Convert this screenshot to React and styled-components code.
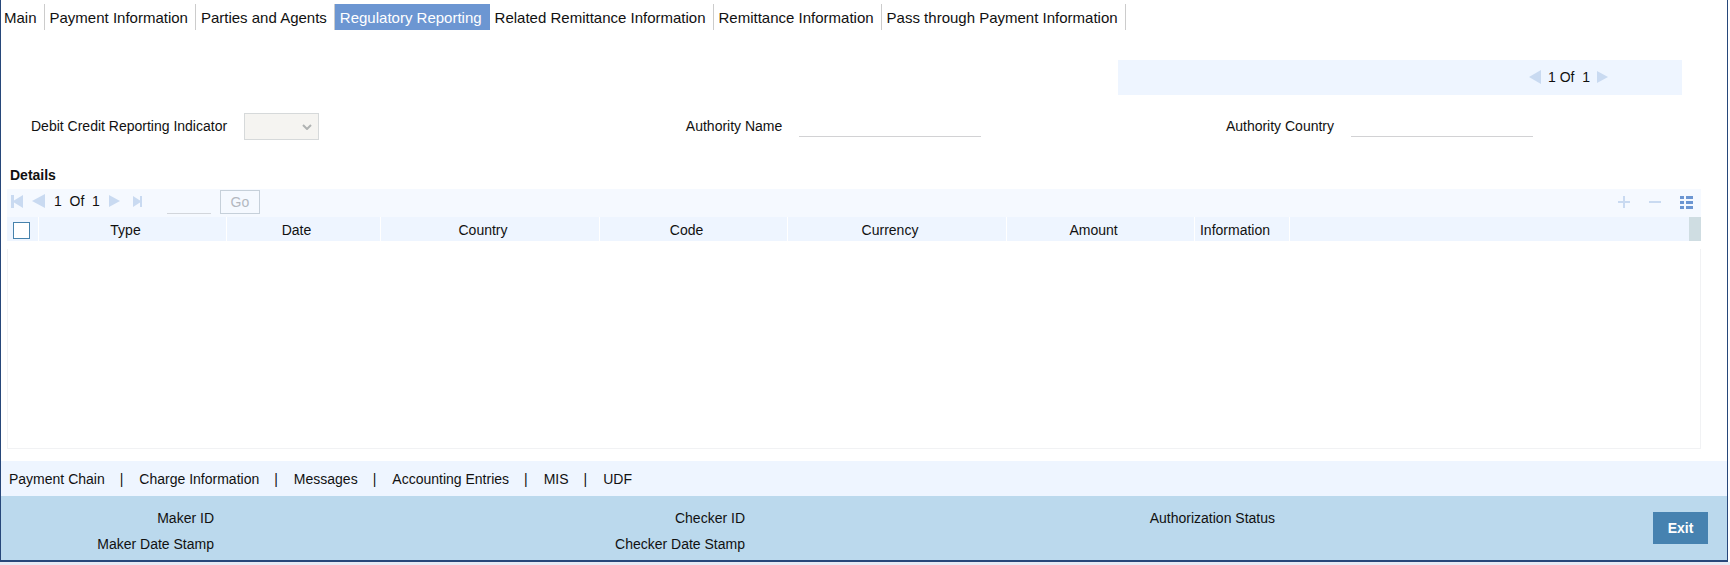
import styled, { createGlobalStyle } from "styled-components";
import { useState } from "react";

const tabs = [
  "Main",
  "Payment Information",
  "Parties and Agents",
  "Regulatory Reporting",
  "Related Remittance Information",
  "Remittance Information",
  "Pass through Payment Information",
];

const columns = [
  { title: "Type", width: 188 },
  { title: "Date", width: 154 },
  { title: "Country", width: 219 },
  { title: "Code", width: 188 },
  { title: "Currency", width: 219 },
  { title: "Amount", width: 188 },
  { title: "Information", width: 95 },
];

const links = [
  "Payment Chain",
  "Charge Information",
  "Messages",
  "Accounting Entries",
  "MIS",
  "UDF",
];

const App = () => {
  const [activeTab, setActiveTab] = useState("Regulatory Reporting");

  return (
    <>
      <GlobalStyle />
      <Window>
        <TabBar>
          {tabs.map((tab) => (
            <Tab
              key={tab}
              $active={tab === activeTab}
              onClick={() => setActiveTab(tab)}
            >
              {tab}
            </Tab>
          ))}
        </TabBar>

        <RecordRow>
          <RecordPager>
            <IconButton aria-label="Previous record">
              <svg width="12" height="14" viewBox="0 0 12 14">
                <path d="M12 0v14L0 7z" />
              </svg>
            </IconButton>
            <PageText>1 Of&nbsp; 1</PageText>
            <IconButton aria-label="Next record">
              <svg width="11" height="12" viewBox="0 0 11 12">
                <path d="M0 0v12l11-6z" />
              </svg>
            </IconButton>
          </RecordPager>
        </RecordRow>

        <Fields>
          <Field>
            <Label htmlFor="indicator">Debit Credit Reporting Indicator</Label>
            <SelectBox>
              <Select id="indicator" disabled />
              <Chevron width="10" height="6" viewBox="0 0 10 6">
                <path d="M1 1l4 4 4-4" />
              </Chevron>
            </SelectBox>
          </Field>
          <Field>
            <Label htmlFor="authority-name">Authority Name</Label>
            <Input id="authority-name" readOnly />
          </Field>
          <Field>
            <Label htmlFor="authority-country">Authority Country</Label>
            <Input id="authority-country" readOnly />
          </Field>
        </Fields>

        <Details>
          <Title>Details</Title>
          <Toolbar>
            <Pager>
              <IconButton aria-label="First page">
                <svg width="12" height="13" viewBox="0 0 12 13">
                  <path d="M0 0h3v5.500L12 0v13L3 7.500V13H0z" />
                </svg>
              </IconButton>
              <IconButton aria-label="Previous page">
                <svg width="13" height="14" viewBox="0 0 13 14">
                  <path d="M13 0v14L0 7z" />
                </svg>
              </IconButton>
              <PageText>1&nbsp; Of&nbsp; 1</PageText>
              <IconButton aria-label="Next page">
                <svg width="11" height="12" viewBox="0 0 11 12">
                  <path d="M0 0v12l11-6z" />
                </svg>
              </IconButton>
              <IconButton aria-label="Last page">
                <svg width="10" height="11" viewBox="0 0 10 11">
                  <path d="M0 0l7 4.500V0h2v11H7V6.500L0 11z" />
                </svg>
              </IconButton>
            </Pager>
            <PageInput aria-label="Page number" readOnly />
            <GoButton disabled>Go</GoButton>
            <Actions>
              <IconButton aria-label="Add row">
                <svg width="12" height="12" viewBox="0 0 12 12">
                  <path d="M5 0h2v5h5v2H7v5H5V7H0V5h5z" />
                </svg>
              </IconButton>
              <IconButton aria-label="Delete row">
                <svg width="12" height="12" viewBox="0 0 12 12">
                  <path d="M0 5h12v2H0z" />
                </svg>
              </IconButton>
              <IconButton $strong aria-label="Single view">
                <svg width="13" height="13" viewBox="0 0 13 13">
                  <path d="M0 0h4v3H0zM6 0h7v3H6zM0 5h4v3H0zM6 5h7v3H6zM0 10h4v3H0zM6 10h7v3H6z" />
                </svg>
              </IconButton>
            </Actions>
          </Toolbar>
          <Table>
            <colgroup>
              <Col $width={32} />
              {columns.map(({ title, width }) => (
                <Col key={title} $width={width} />
              ))}
              <col />
              <Col $width={12} />
            </colgroup>
            <thead>
              <tr>
                <HeadCell>
                  <Checkbox type="checkbox" aria-label="Select all rows" />
                </HeadCell>
                {columns.map(({ title }) => (
                  <HeadCell key={title} scope="col">
                    {title}
                  </HeadCell>
                ))}
                <FillCell />
                <ScrollCell />
              </tr>
            </thead>
          </Table>
          <TableBody />
        </Details>

        <LinkBar>
          {links.map((link) => (
            <LinkItem key={link}>
              <Link href="#">{link}</Link>
            </LinkItem>
          ))}
        </LinkBar>

        <Footer>
          <Audit>
            <span>Maker ID</span>
            <span>Maker Date Stamp</span>
          </Audit>
          <Audit>
            <span>Checker ID</span>
            <span>Checker Date Stamp</span>
          </Audit>
          <Audit>
            <span>Authorization Status</span>
          </Audit>
          <ExitButton>Exit</ExitButton>
        </Footer>
      </Window>
    </>
  );
};

const GlobalStyle = createGlobalStyle`
  * {
    box-sizing: border-box;
  }
  body {
    margin: 0;
    background: #e6eaf4;
    color: #111;
    font: 14px/16px "Liberation Sans", Arial, sans-serif;
  }
  button,
  input,
  select {
    margin: 0;
    padding: 0;
    border: 0;
    border-radius: 0;
    background: none;
    color: inherit;
    font: inherit;
  }
`;

const Window = styled.main`
  margin-right: 2px;
  border: 1px solid #27477a;
  border-top: 0;
  border-bottom-width: 2px;
  background: #fff;
  box-shadow: 2px 0 #fff;
`;

const TabBar = styled.nav`
  display: flex;
  padding-top: 4px;
`;
const Tab = styled.button`
  height: 26px;
  padding: 2px 7px 0 5px;
  border-right: 1px solid ${({ $active }) => ($active ? "#6c96d2" : "#ccc")};
  background: ${({ $active }) => ($active ? "#6c96d2" : "transparent")};
  color: ${({ $active }) => ($active ? "#fff" : "inherit")};
  font-size: 15px;
  white-space: nowrap;
  cursor: pointer;

  &:first-child {
    padding-left: 3px;
  }
`;

const RecordRow = styled.div`
  display: grid;
  grid-template-columns: 1117fr 564fr;
  padding: 30px 45px 0 0;
`;
const RecordPager = styled.div`
  display: flex;
  grid-column: 2;
  align-items: center;
  justify-content: flex-end;
  gap: 7px;
  height: 35px;
  padding: 0 74px 1px 0;
  background: #eef5ff;
`;
const PageText = styled.span`
  white-space: nowrap;
`;
const IconButton = styled.button`
  display: flex;
  color: ${({ $strong }) => ($strong ? "#6c96d2" : "#c9daf1")};
  cursor: pointer;

  svg {
    fill: currentColor;
  }
`;

const Fields = styled.div`
  display: grid;
  grid-template-columns: 656fr 541fr 502fr;
  padding: 18px 0 0 30px;
`;
const Field = styled.div`
  display: flex;
  align-items: center;
  gap: 17px;
  height: 27px;
`;
const Label = styled.label`
  padding-bottom: 2px;
  white-space: nowrap;
`;
const SelectBox = styled.div`
  position: relative;
  width: 75px;
  height: 27px;
`;
const Select = styled.select`
  appearance: none;
  width: 100%;
  height: 100%;
  border: 1px solid #d6d9da;
  background: #f5f4f1;
  opacity: 1;
`;
const Chevron = styled.svg`
  position: absolute;
  top: 11px;
  right: 7px;
  fill: none;
  stroke: #b0b3b3;
  stroke-width: 2;
  pointer-events: none;
`;
const Input = styled.input`
  width: 182px;
  height: 21px;
  border-bottom: 1px solid #d2d2d4;
`;

const Details = styled.section`
  padding: 27px 26px 12px 6px;
`;
const Title = styled.h2`
  margin: 0;
  padding: 0 0 6px 3px;
  font-size: 14px;
  line-height: 16px;
`;
const Toolbar = styled.div`
  display: flex;
  align-items: flex-start;
  height: 28px;
  padding: 1px 8px 0 4px;
  background: #f5f9ff;
`;
const Pager = styled.div`
  display: flex;
  align-items: center;
  gap: 9px;
  height: 22px;

  ${IconButton}:last-child {
    margin-left: 4px;
  }
`;
const PageInput = styled.input`
  width: 44px;
  height: 24px;
  margin-left: 24px;
  border-bottom: 1px solid #d2d6dc;
`;
const GoButton = styled.button`
  width: 40px;
  height: 24px;
  margin-left: 9px;
  border: 1px solid #c6d0da;
  color: #b3b8bf;
`;
const Actions = styled.div`
  display: flex;
  align-items: center;
  gap: 19px;
  height: 24px;
  margin-left: auto;
`;

const Table = styled.table`
  width: 100%;
  border-spacing: 0;
  table-layout: fixed;
`;
const Col = styled.col`
  width: ${({ $width }) => $width}px;
`;
const HeadCell = styled.th`
  height: 24px;
  padding: 2px 14px 0 0;
  border-right: 1px solid #fff;
  background: #eef5ff;
  font-weight: normal;

  &:first-child {
    padding: 0;
  }
`;
const FillCell = styled.td`
  padding: 0;
  background: #eef5ff;
`;
const ScrollCell = styled.td`
  padding: 0;
  background: #cfdde2;
`;
const Checkbox = styled.input`
  display: block;
  appearance: none;
  width: 17px;
  height: 17px;
  margin: 5px 0 2px 6px;
  border: 1px solid #4682ac;
  background: #fff;
`;
const TableBody = styled.div`
  height: 200px;
  margin-top: 8px;
  border: 1px solid #f1f2f4;
  border-top: 0;
`;

const LinkBar = styled.nav`
  display: flex;
  align-items: center;
  height: 35px;
  padding-left: 8px;
  background: #eef5ff;
`;
const LinkItem = styled.span`
  & + &::before {
    content: "|";
    margin: 0 16px 0 15px;
  }
`;
const Link = styled.a`
  color: inherit;
  text-decoration: none;
`;

const Footer = styled.footer`
  display: grid;
  grid-template-columns: 213fr 531fr 530fr 433fr;
  align-items: start;
  height: 64px;
  padding: 14px 19px 0 0;
  background: #bbd9ed;
`;
const Audit = styled.div`
  display: flex;
  flex-direction: column;
  align-items: flex-end;
  gap: 10px;
`;
const ExitButton = styled.button`
  justify-self: end;
  width: 55px;
  height: 32px;
  margin-top: 2px;
  background: #4682b0;
  color: #fff;
  font-weight: bold;
  cursor: pointer;
`;

export default App;
